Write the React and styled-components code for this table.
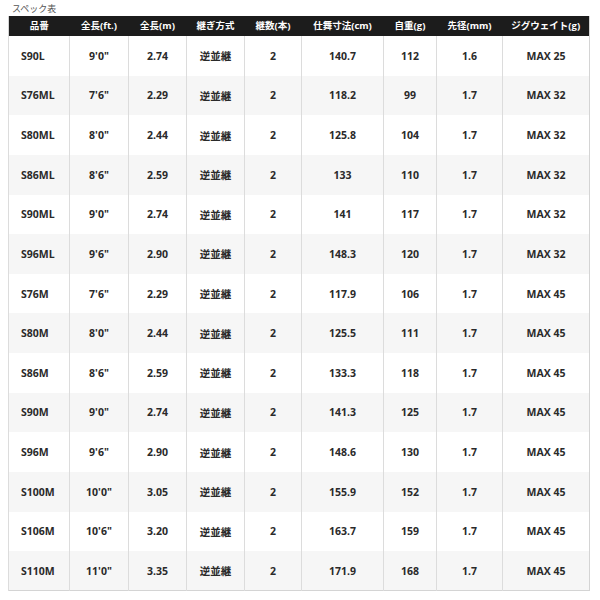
import React from 'react';
import styled, { createGlobalStyle } from 'styled-components';

const GlobalStyle = createGlobalStyle`
    body {
        margin:0;
        background:#fff;
        font-family:"Open Sans", "Noto Sans CJK JP", sans-serif;
    }
`;

const Wrapper = styled.div`
    width:581px;
    padding:0 0 0 8px;
`;

const Caption = styled.div`
    height:16px;
    line-height:18px;
    padding-left:4px;
    font-size:9px;
    color:#555;
`;

const Table = styled.table`
    width:581px;
    border-collapse:collapse;
    table-layout:fixed;
    border:1px solid #d4d4d4;
    border-top:none;
`;

const HeadCell = styled.th`
    height:20px;
    padding:0;
    background-color:#1c1c1c;
    color:#fff;
    font-size:9.5px;
    font-weight:700;
    text-align:center;
    line-height:20px;
    white-space:nowrap;
`;

const Row = styled.tr`
    height:39.64px;
    background-color:${props => props.$shaded ? '#f6f6f6' : '#fff'};
`;

const Cell = styled.td`
    padding:${props => props.$left ? '0 0 0 12px' : '0'};
    border-left:1px solid #dcdcdc;
    color:#2a2a2a;
    font-size:10.5px;
    font-weight:700;
    text-align:${props => props.$left ? 'left' : 'center'};
    white-space:nowrap;
`;

const columns = [
    {label:'品番', width:61},
    {label:'全長(ft.)', width:59},
    {label:'全長(m)', width:58},
    {label:'継ぎ方式', width:58},
    {label:'継数(本)', width:57},
    {label:'仕舞寸法(cm)', width:82},
    {label:'自重(g)', width:53},
    {label:'先径(mm)', width:66},
    {label:'ジグウェイト(g)', width:87},
];

const rows = [
    ['S90L', '9\'0"', '2.74', '140.7', '112', '1.6', 'MAX 25'],
    ['S76ML', '7\'6"', '2.29', '118.2', '99', '1.7', 'MAX 32'],
    ['S80ML', '8\'0"', '2.44', '125.8', '104', '1.7', 'MAX 32'],
    ['S86ML', '8\'6"', '2.59', '133', '110', '1.7', 'MAX 32'],
    ['S90ML', '9\'0"', '2.74', '141', '117', '1.7', 'MAX 32'],
    ['S96ML', '9\'6"', '2.90', '148.3', '120', '1.7', 'MAX 32'],
    ['S76M', '7\'6"', '2.29', '117.9', '106', '1.7', 'MAX 45'],
    ['S80M', '8\'0"', '2.44', '125.5', '111', '1.7', 'MAX 45'],
    ['S86M', '8\'6"', '2.59', '133.3', '118', '1.7', 'MAX 45'],
    ['S90M', '9\'0"', '2.74', '141.3', '125', '1.7', 'MAX 45'],
    ['S96M', '9\'6"', '2.90', '148.6', '130', '1.7', 'MAX 45'],
    ['S100M', '10\'0"', '3.05', '155.9', '152', '1.7', 'MAX 45'],
    ['S106M', '10\'6"', '3.20', '163.7', '159', '1.7', 'MAX 45'],
    ['S110M', '11\'0"', '3.35', '171.9', '168', '1.7', 'MAX 45'],
];

function App() {
    return (
        <Wrapper>
            <GlobalStyle />
            <Caption>スペック表</Caption>
            <Table>
                <colgroup>
                    {columns.map(c => <col key={c.label} style={{width:c.width}} />)}
                </colgroup>
                <thead>
                    <tr>
                        {columns.map(c => <HeadCell key={c.label}>{c.label}</HeadCell>)}
                    </tr>
                </thead>
                <tbody>
                    {rows.map((r, i) => (
                        <Row key={r[0]} $shaded={i % 2 === 1}>
                            <Cell $left>{r[0]}</Cell>
                            <Cell>{r[1]}</Cell>
                            <Cell>{r[2]}</Cell>
                            <Cell>逆並継</Cell>
                            <Cell>2</Cell>
                            <Cell>{r[3]}</Cell>
                            <Cell>{r[4]}</Cell>
                            <Cell>{r[5]}</Cell>
                            <Cell>{r[6]}</Cell>
                        </Row>
                    ))}
                </tbody>
            </Table>
        </Wrapper>
    );
}

export default App;
